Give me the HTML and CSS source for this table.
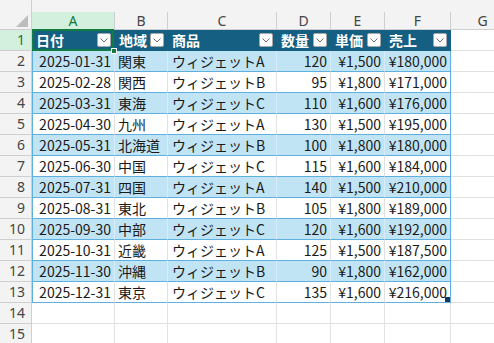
FILE: index.html
```html
<!DOCTYPE html>
<html lang="ja">
<head>
<meta charset="utf-8">
<title>Sheet</title>
<link rel="stylesheet" href="styles.css">
</head>
<body>
<div class="sheet">
  <div class="top">
    <div class="corner"><svg class="tri" width="12" height="12" viewBox="0 0 12 12"><polygon points="12,0 12,12 0,12" fill="#bdbdbd"/></svg></div>
    <div class="strip"></div>
    <div class="col sel">A</div>
    <div class="col">B</div>
    <div class="col">C</div>
    <div class="col">D</div>
    <div class="col">E</div>
    <div class="col">F</div>
    <div class="col">G</div>
  </div>

  <div class="row h">
    <div class="rn sel">1</div>
    <div class="c">日付<span class="dd"><svg width="8" height="5" viewBox="0 0 8 5"><path d="M0.5 0.5 L4 4 L7.5 0.5" fill="none" stroke="#6b6b6b" stroke-width="1"/></svg></span></div>
    <div class="c">地域<span class="dd"><svg width="8" height="5" viewBox="0 0 8 5"><path d="M0.5 0.5 L4 4 L7.5 0.5" fill="none" stroke="#6b6b6b" stroke-width="1"/></svg></span></div>
    <div class="c">商品<span class="dd"><svg width="8" height="5" viewBox="0 0 8 5"><path d="M0.5 0.5 L4 4 L7.5 0.5" fill="none" stroke="#6b6b6b" stroke-width="1"/></svg></span></div>
    <div class="c">数量<span class="dd"><svg width="8" height="5" viewBox="0 0 8 5"><path d="M0.5 0.5 L4 4 L7.5 0.5" fill="none" stroke="#6b6b6b" stroke-width="1"/></svg></span></div>
    <div class="c">単価<span class="dd"><svg width="8" height="5" viewBox="0 0 8 5"><path d="M0.5 0.5 L4 4 L7.5 0.5" fill="none" stroke="#6b6b6b" stroke-width="1"/></svg></span></div>
    <div class="c">売上<span class="dd"><svg width="8" height="5" viewBox="0 0 8 5"><path d="M0.5 0.5 L4 4 L7.5 0.5" fill="none" stroke="#6b6b6b" stroke-width="1"/></svg></span></div>
    <div class="c blank"></div>
  </div>

  <div class="row t band"><div class="rn">2</div><div class="c r">2025-01-31</div><div class="c">関東</div><div class="c k">ウィジェットA</div><div class="c r">120</div><div class="c r">¥1,500</div><div class="c r">¥180,000</div><div class="c blank"></div></div>
  <div class="row t"><div class="rn">3</div><div class="c r">2025-02-28</div><div class="c">関西</div><div class="c k">ウィジェットB</div><div class="c r">95</div><div class="c r">¥1,800</div><div class="c r">¥171,000</div><div class="c blank"></div></div>
  <div class="row t band"><div class="rn">4</div><div class="c r">2025-03-31</div><div class="c">東海</div><div class="c k">ウィジェットC</div><div class="c r">110</div><div class="c r">¥1,600</div><div class="c r">¥176,000</div><div class="c blank"></div></div>
  <div class="row t"><div class="rn">5</div><div class="c r">2025-04-30</div><div class="c">九州</div><div class="c k">ウィジェットA</div><div class="c r">130</div><div class="c r">¥1,500</div><div class="c r">¥195,000</div><div class="c blank"></div></div>
  <div class="row t band"><div class="rn">6</div><div class="c r">2025-05-31</div><div class="c">北海道</div><div class="c k">ウィジェットB</div><div class="c r">100</div><div class="c r">¥1,800</div><div class="c r">¥180,000</div><div class="c blank"></div></div>
  <div class="row t"><div class="rn">7</div><div class="c r">2025-06-30</div><div class="c">中国</div><div class="c k">ウィジェットC</div><div class="c r">115</div><div class="c r">¥1,600</div><div class="c r">¥184,000</div><div class="c blank"></div></div>
  <div class="row t band"><div class="rn">8</div><div class="c r">2025-07-31</div><div class="c">四国</div><div class="c k">ウィジェットA</div><div class="c r">140</div><div class="c r">¥1,500</div><div class="c r">¥210,000</div><div class="c blank"></div></div>
  <div class="row t"><div class="rn">9</div><div class="c r">2025-08-31</div><div class="c">東北</div><div class="c k">ウィジェットB</div><div class="c r">105</div><div class="c r">¥1,800</div><div class="c r">¥189,000</div><div class="c blank"></div></div>
  <div class="row t band"><div class="rn">10</div><div class="c r">2025-09-30</div><div class="c">中部</div><div class="c k">ウィジェットC</div><div class="c r">120</div><div class="c r">¥1,600</div><div class="c r">¥192,000</div><div class="c blank"></div></div>
  <div class="row t"><div class="rn">11</div><div class="c r">2025-10-31</div><div class="c">近畿</div><div class="c k">ウィジェットA</div><div class="c r">125</div><div class="c r">¥1,500</div><div class="c r">¥187,500</div><div class="c blank"></div></div>
  <div class="row t band"><div class="rn">12</div><div class="c r">2025-11-30</div><div class="c">沖縄</div><div class="c k">ウィジェットB</div><div class="c r">90</div><div class="c r">¥1,800</div><div class="c r">¥162,000</div><div class="c blank"></div></div>
  <div class="row t"><div class="rn">13</div><div class="c r">2025-12-31</div><div class="c">東京</div><div class="c k">ウィジェットC</div><div class="c r">135</div><div class="c r">¥1,600</div><div class="c r last">¥216,000<span class="thandle"></span></div><div class="c blank"></div></div>

  <div class="row"><div class="rn">14</div><div class="c"></div><div class="c"></div><div class="c"></div><div class="c"></div><div class="c"></div><div class="c"></div><div class="c"></div></div>
  <div class="row"><div class="rn">15</div><div class="c"></div><div class="c"></div><div class="c"></div><div class="c"></div><div class="c"></div><div class="c"></div><div class="c"></div></div>

  <div class="active"><span class="ahandle"></span></div>
</div>
</body>
</html>
```

FILE: styles.css
```css
:root {
  --cols: 32px 83px 53px 109px 54px 54px 66px 64px;
  --grid: #e1e1e1;
  --hdr-line: #cfcfcf;
  --hdr-bg: #f3f3f3;
  --tbl-line: #5eb0e0;
  --band: #c1e4f5;
  --dark: #156082;
  --green: #107c41;
}

html, body {
  margin: 0;
  padding: 0;
  overflow: hidden;
  background: #ffffff;
}

body {
  font-family: "Noto Sans CJK JP", "Noto Sans", sans-serif;
  font-size: 14px;
  color: #1a1a1a;
}

.sheet {
  position: relative;
  width: 515px;
}

.top {
  display: grid;
  grid-template-columns: var(--cols);
  grid-template-rows: 12px 18px;
  background: var(--hdr-bg);
}

.corner {
  grid-row: 1 / 3;
  grid-column: 1;
  position: relative;
  border-right: 1px solid var(--hdr-line);
  border-bottom: 1px solid var(--hdr-line);
  box-sizing: border-box;
}

.tri {
  position: absolute;
  right: 3px;
  bottom: 2px;
}

.strip {
  grid-row: 1;
  grid-column: 2 / -1;
}

.col {
  grid-row: 2;
  box-sizing: border-box;
  border-right: 1px solid var(--hdr-line);
  border-bottom: 1px solid var(--hdr-line);
  text-align: center;
  font-family: "Noto Sans", sans-serif;
  font-size: 14px;
  line-height: 17px;
  color: #454545;
}

.col.sel {
  background: #d3efdd;
  color: var(--green);
}

.row {
  display: grid;
  grid-template-columns: var(--cols);
  height: 21px;
}

.rn {
  box-sizing: border-box;
  background: var(--hdr-bg);
  border-right: 1px solid var(--hdr-line);
  border-bottom: 1px solid var(--hdr-line);
  text-align: right;
  padding-right: 6px;
  font-family: "Noto Sans", sans-serif;
  font-size: 14px;
  line-height: 20px;
  color: #454545;
}

.rn.sel {
  background: #d3efdd;
  color: var(--green);
}

.c {
  box-sizing: border-box;
  border-right: 1px solid var(--grid);
  border-bottom: 1px solid var(--grid);
  padding: 0 3px;
  line-height: 20px;
  white-space: nowrap;
  overflow: hidden;
}

.r {
  text-align: right;
}

.k {
  padding-left: 4px;
}

/* table header row */
.h .c {
  background: var(--dark);
  border-right-color: var(--dark);
  border-bottom-color: var(--dark);
  color: #ffffff;
  font-weight: 700;
  display: flex;
  align-items: center;
  justify-content: space-between;
  padding: 0 3px 0 4px;
}

.h .c.blank {
  background: #ffffff;
  border-right-color: var(--grid);
  border-bottom-color: var(--grid);
}

.dd {
  width: 14px;
  height: 14px;
  box-sizing: border-box;
  background: #ffffff;
  border: 1px solid #a8a8a8;
  border-radius: 2px;
  display: flex;
  align-items: center;
  justify-content: center;
  flex: none;
}

/* table body rows */
.t .c {
  border-bottom-color: var(--tbl-line);
}

.t .c:nth-child(2) {
  border-left: 1px solid var(--tbl-line);
}

.t .c:nth-child(7) {
  border-right-color: var(--tbl-line);
}

.t .c.blank {
  border-bottom-color: var(--grid);
}

.band .c {
  background: var(--band);
  border-right-color: #d6ecf8;
}

.band .c:nth-child(7) {
  border-right-color: var(--tbl-line);
}

.band .c.blank {
  background: #ffffff;
  border-right-color: var(--grid);
}

.last {
  position: relative;
}

.thandle {
  position: absolute;
  right: 0;
  bottom: 0;
  width: 5px;
  height: 5px;
  background: #143a5e;
}

/* active cell A1 */
.active {
  position: absolute;
  left: 32px;
  top: 29px;
  width: 82px;
  height: 22px;
  box-sizing: border-box;
  border: 2px solid var(--green);
}

.ahandle {
  position: absolute;
  right: -5px;
  bottom: -5px;
  width: 6px;
  height: 6px;
  box-sizing: border-box;
  background: var(--green);
  border: 1px solid #ffffff;
}
```
